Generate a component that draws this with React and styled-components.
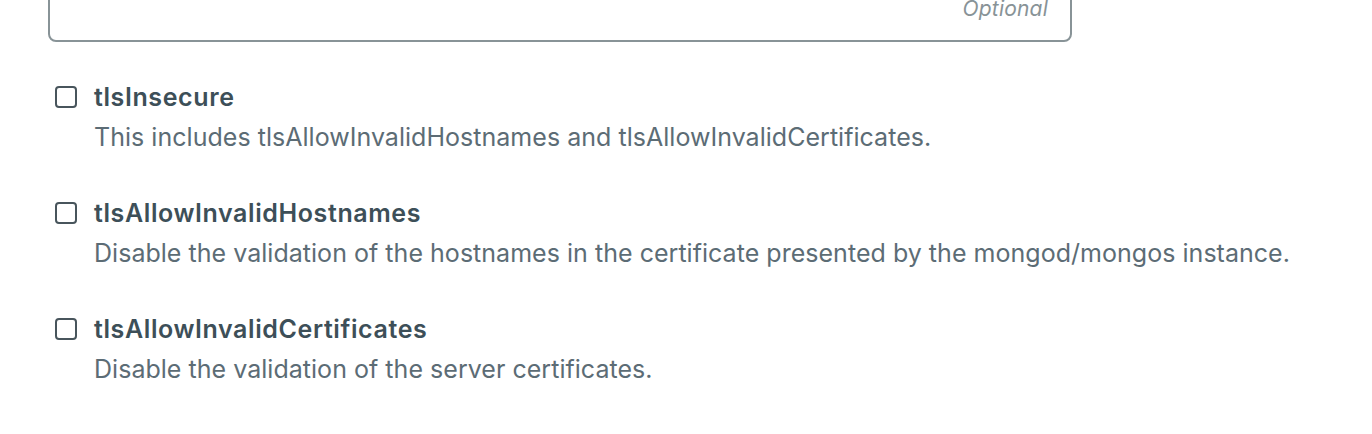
import React from "react";
import styled, { createGlobalStyle } from "styled-components";

const GlobalStyle = createGlobalStyle`
  html, body {
    margin: 0;
    padding: 0;
    background: #ffffff;
    overflow: hidden;
  }
  body {
    font-family: Inter, "Liberation Sans", Arial, sans-serif;
  }
`;

const Page = styled.div`
  width: 1372px;
  height: 434px;
  padding-left: 48px;
  box-sizing: border-box;
`;

const InputBox = styled.div`
  margin-top: -40px;
  width: 1024px;
  height: 82px;
  box-sizing: border-box;
  border: 2px solid #889397;
  border-radius: 8px;
  display: flex;
  align-items: flex-end;
  justify-content: flex-end;
  padding: 0 22px 20px 0;
`;

const Hint = styled.span`
  font-size: 21px;
  font-style: italic;
  color: #889397;
  line-height: 22px;
  letter-spacing: 0.2px;
`;

const Options = styled.div`
  display: flex;
  flex-direction: column;
  gap: 44px;
  padding: 39px 0 0 7px;
`;

const Option = styled.div`
  display: flex;
  flex-direction: column;
`;

const LabelRow = styled.label`
  display: flex;
  align-items: center;
  gap: 17px;
  height: 32px;
  cursor: pointer;
`;

const Box = styled.span`
  width: 22px;
  height: 22px;
  box-sizing: border-box;
  border: 2px solid #48555c;
  border-radius: 4px;
  background: #ffffff;
  flex: none;
`;

const LabelText = styled.span`
  font-size: 25px;
  font-weight: 600;
  color: #3d4f58;
  line-height: 32px;
  letter-spacing: 0.6px;
`;

const Description = styled.div`
  margin-left: 39px;
  margin-top: 8px;
  font-size: 25px;
  color: #5c6c75;
  line-height: 32px;
  letter-spacing: 0.03px;
`;

const options = [
  {
    name: "tlsInsecure",
    text: "This includes tlsAllowInvalidHostnames and tlsAllowInvalidCertificates.",
  },
  {
    name: "tlsAllowInvalidHostnames",
    text: "Disable the validation of the hostnames in the certificate presented by the mongod/mongos instance.",
  },
  {
    name: "tlsAllowInvalidCertificates",
    text: "Disable the validation of the server certificates.",
  },
];

export default function App() {
  return (
    <Page>
      <GlobalStyle />
      <InputBox>
        <Hint>Optional</Hint>
      </InputBox>
      <Options>
        {options.map((o) => (
          <Option key={o.name}>
            <LabelRow>
              <Box />
              <LabelText>{o.name}</LabelText>
            </LabelRow>
            <Description>{o.text}</Description>
          </Option>
        ))}
      </Options>
    </Page>
  );
}
